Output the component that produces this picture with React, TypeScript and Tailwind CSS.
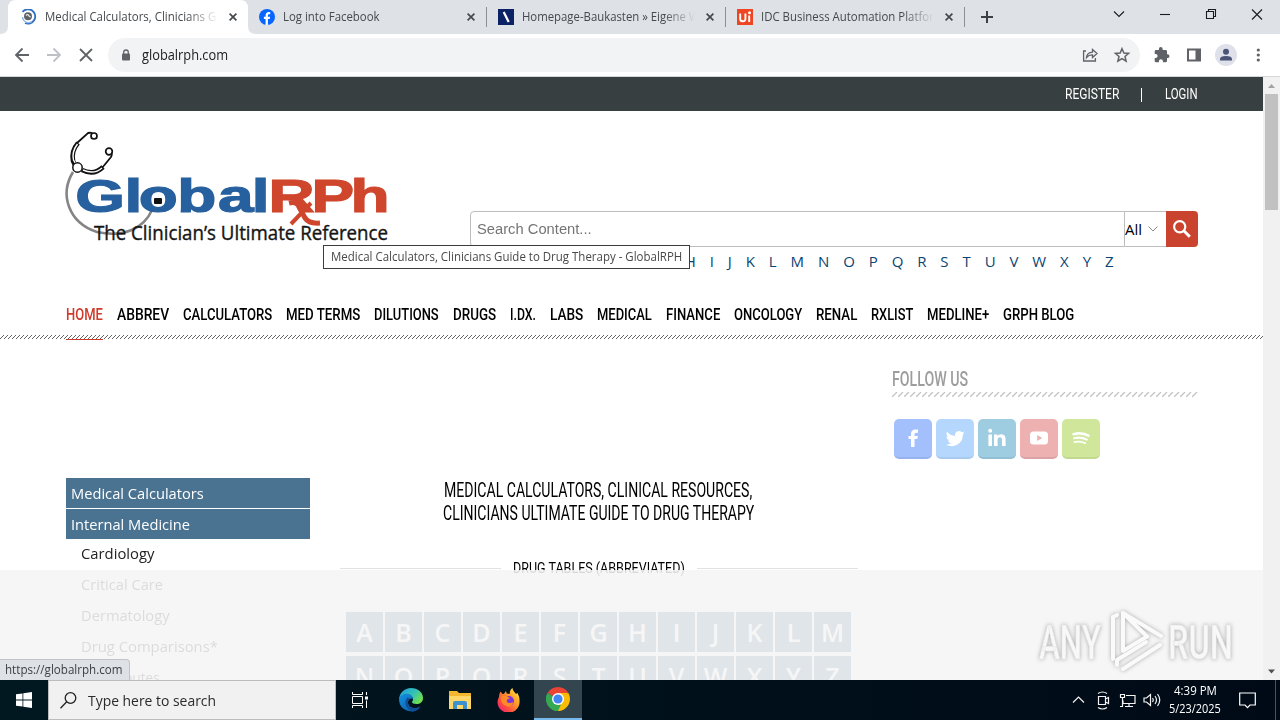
import { useLayoutEffect, useRef, useState, type ReactNode } from "react";

const NAV = [
    { label: "HOME", w: 37 },
    { label: "ABBREV", w: 52 },
    { label: "CALCULATORS", w: 89 },
    { label: "MED TERMS", w: 74 },
    { label: "DILUTIONS", w: 65 },
    { label: "DRUGS", w: 43 },
    { label: "I.DX.", w: 26 },
    { label: "LABS", w: 33 },
    { label: "MEDICAL", w: 55 },
    { label: "FINANCE", w: 54 },
    { label: "ONCOLOGY", w: 68 },
    { label: "RENAL", w: 41 },
    { label: "RXLIST", w: 42 },
    { label: "MEDLINE+", w: 62 },
    { label: "GRPH BLOG", w: 71 },
];

const LETTERS = "ABCDEFGHIJKLMNOPQRSTUVWXYZ".split("");

const TOPICS = [
    { label: "Critical Care", w: 82 },
    { label: "Dermatology", w: 89 },
    { label: "Drug Comparisons*", w: 137 },
    { label: "Drug Routes", w: 79 },
];

// Squeezes a single line of text into a fixed width
function Fit({ w, children, className = "" }: { w: number; children: ReactNode; className?: string }) {
    const ref = useRef<HTMLSpanElement>(null);
    const [scale, setScale] = useState(1);

    useLayoutEffect(() => {
        if (ref.current) setScale(w / ref.current.offsetWidth);
    }, [w]);

    return (
        <span className={`inline-block whitespace-nowrap shrink-0 ${className}`} style={{ width: w }}>
            <span ref={ref} className="inline-block origin-left" style={{ transform: `scaleX(${scale})` }}>
                {children}
            </span>
        </span>
    );
}

function CloseX({ size = 8, className = "" }: { size?: number; className?: string }) {
    return (
        <svg width={size} height={size} viewBox="0 0 8 8" className={className} stroke="currentColor" fill="none">
            <path d="M.6.6l6.8 6.8M7.4.6L.6 7.4" strokeWidth="1.7" />
        </svg>
    );
}

function Tab({ icon, title, w, fade }: { icon: ReactNode; title: string; w: number; fade?: boolean }) {
    return (
        <div className="flex h-[34px] w-[239px] shrink-0 items-center pl-3 text-[#45494d]">
            {icon}
            <div className={`ml-2 w-[173px] overflow-hidden text-[12px] leading-4 ${fade ? "[mask-image:linear-gradient(to_right,black_82%,transparent)]" : ""}`}>
                <Fit w={w}>{title}</Fit>
            </div>
            <CloseX className="ml-[11px]" />
        </div>
    );
}

function TabBar() {
    return (
        <div className="relative flex h-[34px] bg-[#dee1e6] pl-2">
            <div className="relative w-[239px] shrink-0">
                <div className="absolute -left-2 right-[-9px] top-0 h-[34px]">
                    <svg width="256" height="34" viewBox="0 0 256 34">
                        <path d="M0 34q8 0 8-8V8q0-8 8-8h224q8 0 8 8v18q0 8 8 8z" fill="#fff" />
                    </svg>
                </div>
                <div className="relative">
                    <Tab
                        fade
                        title="Medical Calculators, Clinicians G"
                        w={171}
                        icon={
                            <svg width="17" height="16" viewBox="-1 0 17 16" fill="none" className="shrink-0">
                                <path d="M1.500 2.800A7.200 7.200 0 1 1 4 14" stroke="#2f6fc4" strokeWidth="1.800" />
                                <path d="M1.500 8A6 6 0 0 0 11 12.500" stroke="#8ab4e6" strokeWidth="1.300" />
                                <circle cx="7" cy="7.300" r="4" fill="#5f6368" />
                                <path d="M5 6.500q2-2 3 .5l1.600 1" stroke="#e4e8ec" strokeWidth="1.200" />
                            </svg>
                        }
                    />
                </div>
            </div>
            <div className="flex items-center">
                <Tab
                    title="Log into Facebook"
                    w={97}
                    icon={
                        <svg width="16" height="16" viewBox="0 0 16 16" className="shrink-0">
                            <circle cx="8" cy="8" r="8" fill="#0866ff" />
                            <path d="M6.600 16V10H4.900V7.700h1.700V6.500c0-2.300 1.200-3.500 3.200-3.500.6 0 1 .1 1.400.2v2h-1c-1 0-1.300.5-1.300 1.300v1.200h2.200L10.700 10H8.900v6z" fill="#fff" />
                        </svg>
                    }
                />
                <div className="-mr-px h-5 w-px bg-[#8c9095]" />
                <Tab
                    fade
                    title="Homepage-Baukasten » Eigene W"
                    w={177}
                    icon={
                        <svg width="16" height="16" viewBox="0 0 16 16" className="shrink-0">
                            <path d="M0 0h16v16H0z" fill="#0b2265" />
                            <path d="M5.700 3l5 10" stroke="#fff" strokeWidth="2.200" />
                        </svg>
                    }
                />
                <div className="-mr-px h-5 w-px bg-[#8c9095]" />
                <Tab
                    fade
                    title="IDC Business Automation Platfor"
                    w={173}
                    icon={
                        <svg width="16" height="16" viewBox="0 0 16 16" className="shrink-0">
                            <path d="M0 0h16v16H0z" fill="#ee4623" />
                            <path d="M3.200 4.500v5.200q0 2.600 2.600 2.600t2.600-2.600V4.500M12.200 6.500v6.500" stroke="#fff" strokeWidth="1.900" fill="none" />
                            <circle cx="12.500" cy="3.700" r="1.500" fill="#fff" />
                        </svg>
                    }
                />
                <div className="h-5 w-px bg-[#8c9095]" />
                <svg width="12" height="12" viewBox="0 0 12 12" className="ml-4 text-[#3c4043]">
                    <path d="M6 0v12M0 6h12" stroke="currentColor" strokeWidth="2" />
                </svg>
            </div>
            <svg width="160" height="28" viewBox="0 0 160 28" className="ml-auto mr-3 shrink-0" fill="none" stroke="#1b1c1e" strokeWidth="1.100">
                <path d="M6 11.500l5 5 5-5" />
                <path d="M52 14.500h10" />
                <path d="M98.500 11.500h7v7h-7zM100.500 11.500v-2h7v7h-2" />
                <path d="M144 9.500l10 10M154 9.500l-10 10" />
            </svg>
        </div>
    );
}

function Toolbar() {
    return (
        <div className="flex h-[43px] items-center border-b border-[#d5d8da] bg-white pl-[14px]">
            <svg width="80" height="18" viewBox="0 0 80 18" fill="none" strokeWidth="1.800" className="shrink-0">
                <path d="M15 9H2M8.500 2.500L2 9l6.500 6.500" stroke="#5f6368" />
                <path d="M33 9h13M39.500 2.500L46 9l-6.500 6.500" stroke="#bdc1c6" />
                <path d="M66 3l12 12M78 3L66 15" stroke="#5f6368" />
            </svg>
            <div className="ml-[14px] flex h-[34px] w-[1032px] items-center rounded-full bg-[#f1f3f4] pl-[13px]">
                <svg width="10" height="13" viewBox="0 0 10 13" fill="#5f6368">
                    <rect x="1" y="4.500" width="8" height="7" rx="1" />
                    <path d="M2.700 5V3.300a2.300 2.300 0 0 1 4.600 0V5" fill="none" stroke="#5f6368" strokeWidth="1.300" />
                </svg>
                <Fit w={86} className="mb-0.5 ml-[11px] text-[14px] text-[#202124]">globalrph.com</Fit>
                <svg width="50" height="18" viewBox="0 0 50 18" className="ml-auto mr-2" fill="none" stroke="#5f6368" strokeWidth="1.300">
                    <path d="M4 5H1.600v10h11.800v-3" />
                    <path d="M4.500 11.500q.5-5 6-5.300V3.500l4.500 4-4.500 4V8.800q-3.700-.2-6 2.700z" />
                    <path d="M40 2.700l1.900 4.300 4.700.4-3.600 3.100 1.100 4.600-4.100-2.500-4.100 2.500 1.100-4.600-3.600-3.100 4.700-.4z" strokeWidth="1.500" />
                </svg>
            </div>
            <svg width="126" height="26" viewBox="0 0 126 26" className="ml-2 shrink-0" fill="#5f6368">
                <path d="M20 12.300h-1V9.200q0-1.300-1.300-1.300h-3V7a1.900 1.900 0 0 0-3.800 0v.9H8q-1.300 0-1.300 1.300V12h.9a2 2 0 0 1 0 4h-.9v2.900q0 1.300 1.300 1.300h2.900v-.9a2 2 0 0 1 4 0v.9h2.800q1.300 0 1.300-1.300V16h1a1.900 1.900 0 0 0 0-3.700z" />
                <path d="M39 6.500h14v13H39zM41 8.500v9h6.500v-9z" fillRule="evenodd" />
                <circle cx="78" cy="13" r="11" fill="#dee1e9" />
                <circle cx="78" cy="9.700" r="3" fill="#4b5377" />
                <path d="M72 18.500v-1.200q0-3.300 6-3.300t6 3.300v1.200z" fill="#4b5377" />
                <circle cx="110.300" cy="8" r="1.600" />
                <circle cx="110.300" cy="13" r="1.600" />
                <circle cx="110.300" cy="18" r="1.600" />
            </svg>
        </div>
    );
}

function Logo() {
    return (
        <svg width="330" height="120" viewBox="60 127 330 120" className="shrink-0" fill="none">
            <path d="M73 172C59 195 69 223 97 232c27 6 47-4 55-22" stroke="#858585" strokeWidth="2.600" />
            <g stroke="#111">
                <path d="M78 143q-7 8-5 18l3 6" strokeWidth="4.600" />
                <path d="M77.500 144q-6 8-4 16l3 5" stroke="#fff" strokeWidth="1.400" />
                <path d="M77 143l11-10q5-1 5 2" strokeWidth="1.800" />
                <path d="M102 168l9-11q2-3-1-6" strokeWidth="1.800" />
                <path d="M82 170q12 6 21-3" strokeWidth="4.600" />
                <path d="M83 170q11 5 19-2" stroke="#fff" strokeWidth="1.400" />
                <circle cx="94" cy="136" r="3" fill="#fff" strokeWidth="1.700" />
                <circle cx="109" cy="151.500" r="3.300" fill="#fff" strokeWidth="1.700" />
                <circle cx="77.500" cy="167.500" r="4.700" fill="#fff" strokeWidth="1.500" />
            </g>
            <g transform="scale(1.36 1)" fontFamily="'Liberation Sans', sans-serif" fontWeight="700" fontSize="47" strokeWidth="1.200">
                <text x="55.300 91.500 102 130.300 160.300 185.200" y="212.500" fill="#27609e" stroke="#27609e">Global</text>
                <text x="197.500 229.100 257.800" y="212.500" fill="#cf462d" stroke="#cf462d">RPh</text>
            </g>
            <path d="M289 203q8-2 10 4l6 11q4 6 15 5" stroke="#cf462d" strokeWidth="5" />
            <path d="M311 203l-20 21" stroke="#cf462d" strokeWidth="4" />
            <rect x="154" y="198" width="8" height="6" rx="1" fill="#111" />
            <text x="94" y="239.500" textLength="294" lengthAdjust="spacingAndGlyphs" fill="#151515" fontFamily="'Open Sans', sans-serif" fontSize="20.500" stroke="#151515" strokeWidth=".4">
                The Clinician’s Ultimate Reference
            </text>
        </svg>
    );
}

function SearchForm() {
    return (
        <div className="w-[728px] pt-[84px]">
            <div className="flex h-9">
                <div className="flex h-9 w-[655px] items-center rounded-l border border-[#bdbdbd] pl-1.5 font-['Liberation_Sans',sans-serif] text-[15.500px] text-[#757575]">
                    <Fit w={115}>Search Content...</Fit>
                </div>
                <div className="flex w-[41px] items-center border-y border-[#bdbdbd] text-[15px] text-black">
                    <Fit w={17}>All</Fit>
                    <svg width="10" height="6" viewBox="0 0 10 6" className="ml-1.5" fill="none" stroke="#888">
                        <path d="M.5.5L5 5 9.500.5" />
                    </svg>
                </div>
                <div className="flex w-8 items-center justify-center rounded-r bg-[#ca432e]">
                    <svg width="20" height="20" viewBox="0 0 20 20" fill="none" stroke="#fff">
                        <circle cx="7.700" cy="7.700" r="5.600" strokeWidth="2.200" />
                        <path d="M11.800 11.800l6 6" strokeWidth="3" />
                    </svg>
                </div>
            </div>
            <div className="flex justify-end gap-[13.900px] pr-[84.500px] pt-[3px] text-[15px] leading-[22px] text-[#0c4472]">
                {LETTERS.slice(7).map((l) => <span key={l}>{l}</span>)}
            </div>
        </div>
    );
}

function Hatch({ fine }: { fine?: boolean }) {
    return fine ? (
        <svg width="100%" height="4" className="block shrink-0">
            <defs>
                <pattern id="hatch-fine" width="4" height="4" patternUnits="userSpaceOnUse">
                    <path d="M-1 5L5-1M-1 1L1-1M3 5l2-2" stroke="#555" strokeWidth=".9" />
                </pattern>
            </defs>
            <rect width="100%" height="4" fill="url(#hatch-fine)" />
        </svg>
    ) : (
        <svg width="306" height="5" className="block">
            <defs>
                <pattern id="hatch-wide" width="6" height="5" patternUnits="userSpaceOnUse">
                    <path d="M0 5L5 0" stroke="#c4c4c4" strokeWidth="1.300" />
                </pattern>
            </defs>
            <rect width="306" height="5" fill="url(#hatch-wide)" />
        </svg>
    );
}

function Socials() {
    return (
        <div className="ml-0.5 mt-[22px] flex gap-1">
            <div className="flex h-10 w-[38px] items-center justify-center rounded-[5px] border-b-2 border-[#97b3ef] bg-[#a3c0fd]">
                <svg width="20" height="20" viewBox="0 0 20 20" fill="#fff"><path d="M8 19v-8H5.500V8H8V6q0-4.500 4.500-4.500H15v3.200h-1.800q-1.700 0-1.700 1.600V8h3.300l-.5 3h-2.800v8z" /></svg>
            </div>
            <div className="flex h-10 w-[38px] items-center justify-center rounded-[5px] border-b-2 border-[#a8caef] bg-[#b5d7fd]">
                <svg width="19" height="19" viewBox="0 0 24 24" fill="#fff"><path d="M23.600 4.900a9.700 9.700 0 0 1-2.800.8 4.900 4.900 0 0 0 2.100-2.700 9.700 9.700 0 0 1-3.100 1.200 4.900 4.900 0 0 0-8.300 4.500A13.900 13.900 0 0 1 1.400 3.500a4.900 4.900 0 0 0 1.500 6.500 4.900 4.900 0 0 1-2.200-.6 4.900 4.900 0 0 0 3.900 4.900 4.900 4.900 0 0 1-2.200.1 4.900 4.900 0 0 0 4.600 3.400A9.900 9.900 0 0 1 0 19.500a13.900 13.900 0 0 0 21.200-12.300z" /></svg>
            </div>
            <div className="flex h-10 w-[38px] items-center justify-center rounded-[5px] border-b-2 border-[#91bfd3] bg-[#9ecce0]">
                <svg width="20" height="20" viewBox="0 0 20 20" fill="#fff"><circle cx="3.200" cy="2.800" r="2" /><path d="M1.400 6.500H5V18H1.400zM7 6.500h3.400V8Q11.500 6.200 14 6.200q4.600 0 4.600 5V18H15v-6q0-2.800-2.100-2.800-2.300 0-2.300 2.800v6H7z" /></svg>
            </div>
            <div className="flex h-10 w-[38px] items-center justify-center rounded-[5px] border-b-2 border-[#dba3a5] bg-[#eeb1b1]">
                <svg width="20" height="20" viewBox="0 0 20 20" fillRule="evenodd" fill="#fff"><path d="M4.500 3.500h11Q19 3.500 19 7v6q0 3.500-3.500 3.500h-11Q1 16.500 1 13V7q0-3.500 3.500-3.500zM8.200 7v6l5-3z" /></svg>
            </div>
            <div className="flex h-10 w-[38px] items-center justify-center rounded-[5px] border-b-2 border-[#c1d88f] bg-[#cfe69b]">
                <svg width="20" height="20" viewBox="0 0 20 20" fill="none" stroke="#fff" strokeLinecap="round"><path d="M2.500 6.200q8-2.300 15 1.500" strokeWidth="2.600" /><path d="M3 10.300q7-1.800 12.800 1.300" strokeWidth="2.100" /><path d="M3.500 14q5.500-1.300 10.700 1.100" strokeWidth="1.800" /></svg>
            </div>
        </div>
    );
}

function Watermark() {
    return (
        <svg width="200" height="70" viewBox="1036 606 200 70" className="absolute bottom-1 right-[27px] drop-shadow-[0_0_2px_#aaa]" fill="none">
            <g fontFamily="Roboto, sans-serif" fontSize="48" fontWeight="500" fill="#f8f8f8" stroke="#e4e4e4" strokeWidth=".6">
                <text x="1039" y="659" textLength="62" lengthAdjust="spacingAndGlyphs">ANY</text>
                <text x="1168" y="659" textLength="65" lengthAdjust="spacingAndGlyphs">RUN</text>
            </g>
            <g stroke="#fafafa" strokeWidth="4" strokeLinejoin="round" strokeLinecap="round">
                <path d="M1123 613v38l24-14.500z" />
                <path d="M1123 613l38 23" />
                <path d="M1113 617v42M1113 617l4-2" />
                <path d="M1123 669l37-24M1117 665v-5l29-18" />
            </g>
        </svg>
    );
}

function Page() {
    return (
        <div className="relative flex h-[603px] w-[1263px] shrink-0 flex-col overflow-hidden bg-white">
            <div className="flex h-[34px] shrink-0 items-center justify-end bg-[#373f40] pr-[65px] pt-px font-['Roboto',sans-serif] text-[14.500px] text-white">
                <Fit w={54}>REGISTER</Fit>
                <span className="ml-[22px] mr-[23px] h-[14px] w-px bg-white" />
                <Fit w={33}>LOGIN</Fit>
            </div>

            <div className="flex h-[176px] shrink-0 pl-[60px] pt-4">
                <Logo />
                <div className="ml-20">
                    <SearchForm />
                </div>
            </div>

            <div className="flex h-12 shrink-0 gap-[14px] pl-[66px] pt-4 font-['Roboto',sans-serif] text-[16.500px] font-medium leading-6 text-black">
                {NAV.map((n, i) => (
                    <Fit key={n.label} w={n.w} className={i === 0 ? "text-[#cf3a2a]" : ""}>{n.label}</Fit>
                ))}
            </div>
            <Hatch fine />
            <div className="ml-[66px] h-px w-[37px] shrink-0 bg-[#cf3a2a]" />

            <div className="flex pl-[66px]">
                <div className="w-[244px] shrink-0 pt-[138px] text-[15px]">
                    <div className="flex h-[30px] items-center bg-[#4a7291] pl-[5px] text-white"><Fit w={133}>Medical Calculators</Fit></div>
                    <div className="mt-px flex h-[30px] items-center bg-[#4a7291] pl-[5px] text-white"><Fit w={119}>Internal Medicine</Fit></div>
                    <div className="flex h-[30px] items-center pb-0.5 pl-[15px] text-[#222]"><Fit w={73}>Cardiology</Fit></div>
                    {TOPICS.map((t) => (
                        <div key={t.label} className="flex h-[31px] items-center pl-[15px] text-[#222]"><Fit w={t.w}>{t.label}</Fit></div>
                    ))}
                </div>

                <div className="ml-[30px] flex w-[518px] shrink-0 flex-col pt-[139px]">
                    <div className="flex flex-col items-center pr-0.5 font-['Roboto',sans-serif] text-[19.500px] leading-[23px] text-black">
                        <Fit w={308}>MEDICAL CALCULATORS, CLINICAL RESOURCES,</Fit>
                        <Fit w={311}>CLINICIANS ULTIMATE GUIDE TO DRUG THERAPY</Fit>
                    </div>
                    <div className="mt-[31px] flex h-6 items-center justify-between font-['Roboto',sans-serif] text-[15px] text-black">
                        <span className="h-px w-[161px] bg-[#e2e2e2]" />
                        <Fit w={172}>DRUG TABLES (ABBREVIATED)</Fit>
                        <span className="h-px w-[161px] bg-[#e2e2e2]" />
                    </div>
                    <div className="ml-1.5 mt-8 grid w-[505px] grid-cols-13 gap-x-0.5 gap-y-1">
                        {LETTERS.map((l) => (
                            <span key={l} className="flex h-10 items-center justify-center bg-[#4a7291] pt-0.5 text-[25px] font-semibold text-white">{l}</span>
                        ))}
                    </div>
                </div>

                <div className="ml-[34px] w-[306px] shrink-0 pt-[27px]">
                    <div className="h-[25px] font-['Roboto',sans-serif] text-[20px] font-medium leading-[25px] text-[#9d9d9d]"><Fit w={76}>FOLLOW US</Fit></div>
                    <Hatch />
                    <Socials />
                </div>
            </div>

            <div className="absolute left-[323px] top-[168px] flex h-6 w-[367px] items-center border border-[#3c3c3c] bg-white pl-[7px] text-[12px] text-[#484848]">
                <Fit w={351}>Medical Calculators, Clinicians Guide to Drug Therapy - GlobalRPH</Fit>
            </div>
            <div className="absolute inset-x-0 bottom-0 h-[110px] bg-[#f5f5f5]/88" />
            <Watermark />
            <div className="absolute bottom-0 left-0 flex h-[21px] w-[130px] items-center rounded-tr-sm border-r border-t border-[#c0c4c8] bg-[#dee1e6] pl-[5px] text-[12px] text-[#3c4043]">
                <Fit w={118}>https://globalrph.com</Fit>
            </div>
        </div>
    );
}

function Scrollbar() {
    return (
        <div className="flex w-[17px] flex-col items-center bg-[#f1f1f1]">
            <svg width="17" height="17" viewBox="0 0 17 17"><path d="M5 11l3.500-4 3.500 4z" fill="#a3a3a3" /></svg>
            <div className="h-[116px] w-[13px] bg-[#c1c1c1]" />
            <svg width="17" height="17" viewBox="0 0 17 17" className="mt-auto"><path d="M5 6.500l3.500 4 3.500-4z" fill="#505050" /></svg>
        </div>
    );
}

function Taskbar() {
    return (
        <div className="flex h-10 bg-linear-to-r from-[#021820] to-[#000a16]">
            <div className="flex w-12 items-center justify-center">
                <svg width="16" height="16" viewBox="0 0 16 16" fill="#fff"><path d="M0 2.300L6.500 1.400v6.200H0zM7.300 1.300L16 0v7.600H7.300zM0 8.400h6.500v6.200L0 13.700zM7.300 8.400H16V16l-8.700-1.300z" /></svg>
            </div>
            <div className="flex w-72 items-center border border-[#bcbcbc] bg-[#f1f1f1] pl-[11px] text-[15px] text-[#2b2b2b]">
                <svg width="17" height="17" viewBox="0 0 17 17" fill="none" stroke="#222" strokeWidth="1.300"><circle cx="10.500" cy="6" r="5.300" /><path d="M6.700 9.800L.5 16.300" /></svg>
                <Fit w={128} className="ml-[11px]">Type here to search</Fit>
            </div>
            <div className="flex w-12 items-center justify-center">
                <svg width="18" height="16" viewBox="0 0 18 16" fill="none" stroke="#fff"><path d="M1.500 0v2.500h10V0M1.500 4.500h10v7h-10zM1.500 16v-2.500h10V16M15.500 0v3M15.500 8.500V16" /><path d="M14 4.500h3v3h-3z" fill="#fff" stroke="none" /></svg>
            </div>
            <div className="flex w-[54px] items-center justify-center">
                <svg width="24" height="24" viewBox="0 0 24 24">
                    <defs>
                        <linearGradient id="edge-top" x1="0" y1="0" x2="1" y2=".6"><stop stopColor="#1b9de2" /><stop offset=".6" stopColor="#35c1b5" /><stop offset="1" stopColor="#6ee04f" /></linearGradient>
                        <linearGradient id="edge-low" x1="0" y1="0" x2="1" y2="1"><stop stopColor="#1490df" /><stop offset="1" stopColor="#0c59a4" /></linearGradient>
                    </defs>
                    <path d="M0 12A12 12 0 0 1 12 0c7 0 12 4.500 12 10 0 4-3 6-6.500 6-3 0-4.500-1-4.500-2 0-.7 1-1.200 1-3C14 8.500 11 7 8 7c-5 0-8 3-8 5z" fill="url(#edge-top)" />
                    <path d="M0 12c0-4 4-6.500 8-6.300 3.500.2 6 2.300 6 5.300-1.200-1.500-5.500 0-5 4 .5 4.500 6.500 7 12.500 3.500A12 12 0 0 1 0 12z" fill="url(#edge-low)" />
                    <path d="M8.500 9.500c-4 4-2 12 5 14.300 3-.3 6-2 8-5.300-6 3.500-12 1-12.500-3.500-.2-2 .5-3.400 2-4.400z" fill="#0f4f98" />
                </svg>
            </div>
            <div className="flex w-[42px] items-center justify-center pl-0.5">
                <svg width="22" height="20" viewBox="0 0 22 20"><path d="M0 1h8l2 2h12v16H0z" fill="#f3b62e" /><path d="M0 6h22v13H0z" fill="#ffd768" /><path d="M4 19v-6q0-2 2-2h10q2 0 2 2v6h-4v-4H8v4z" fill="#3d91cf" /></svg>
            </div>
            <div className="flex w-[54px] items-center justify-center pl-1">
                <svg width="24" height="24" viewBox="0 0 24 24">
                    <defs>
                        <linearGradient id="fox" x1="1" y1="0" x2="0" y2="1"><stop stopColor="#fff44f" /><stop offset=".35" stopColor="#ffa429" /><stop offset=".7" stopColor="#ff4a41" /><stop offset="1" stopColor="#e31587" /></linearGradient>
                    </defs>
                    <path d="M3.500 3.500L5.500 6l1.500-.2L9 3l.7 2.500 3 .5c0-3 1-5 2.800-6 .2 3 2.500 4 3.500 6l1.500-1q2.500 4.500 2 8.500A11 10.500 0 1 1 2 9q0-3 1.500-5.500z" fill="url(#fox)" />
                    <circle cx="12" cy="13" r="5" fill="#7d36d8" />
                    <path d="M4 8.500q4-2 7 .5l2 1-3 1.800q-1 3.200 3 3.200 2 0 3.500-1-2 6-7.500 4T4 8.500z" fill="#ff8a28" />
                </svg>
            </div>
            <div className="flex w-12 items-center justify-center border-b-2 border-[#76b9ed] bg-[#33454e]">
                <svg width="24" height="24" viewBox="0 0 24 24">
                    <path d="M12 12L1.610 6A12 12 0 0 1 22.390 6z" fill="#ea4335" />
                    <path d="M12 12L22.390 6A12 12 0 0 1 12 24z" fill="#fbbc05" />
                    <path d="M12 12v12A12 12 0 0 1 1.610 6z" fill="#34a853" />
                    <path d="M12 6h10.400q-6 3-7.200 9L12 24l4.800-9z" fill="#fbbc05" />
                    <path d="M1.610 6L6.800 15 12 18l3-.5L12 24A12 12 0 0 1 1.610 6z" fill="#34a853" />
                    <circle cx="12" cy="12" r="6" fill="#fff" />
                    <circle cx="12" cy="12" r="4.600" fill="#4285f4" />
                </svg>
            </div>
            <svg width="92" height="20" viewBox="0 0 92 20" className="my-auto ml-auto shrink-0" fill="none" stroke="#f3f3f3" strokeWidth="1.200">
                <path d="M4 12.500L9.500 7l5.500 5.500" />
                <path d="M29.500 6.500h7v8h-7zM36.500 9l3-1.500v6l-3-1.500M29 3.500q4.500-3 9 0M29 17.500q4.500 3 9 0" />
                <path d="M57 5.500h9v8H54v-3M60 13.500v3M56 16.500h8M51.500 4.500h4v3h-4zM53.500 7.500v9M51 16.500h3" />
                <path d="M75 8h2.500l4-3.500v11L77.500 12H75zM83.500 8q1.500 2 0 4M86 6q3 4 0 8M88.500 4q4.500 6 0 12" />
            </svg>
            <div className="ml-[7px] flex w-[54px] shrink-0 flex-col items-center pt-[2px] text-[12px] leading-[17.500px] text-white">
                <Fit w={43}>4:39 PM</Fit>
                <Fit w={52}>5/23/2025</Fit>
            </div>
            <svg width="17" height="17" viewBox="0 0 17 17" className="my-auto ml-[17px] mr-[19px] shrink-0" fill="none" stroke="#fff" strokeWidth="1.200"><path d="M.7 1h15.600v12H11l-2.500 2.700L6 13H.7z" /></svg>
            <div className="mr-1 w-px bg-[#4a535b]" />
        </div>
    );
}

export default function App() {
    return (
        <div className="h-[720px] w-[1280px] overflow-hidden bg-white font-['Open_Sans','Noto_Sans',sans-serif]">
            <TabBar />
            <Toolbar />
            <div className="flex h-[603px]">
                <Page />
                <Scrollbar />
            </div>
            <Taskbar />
        </div>
    );
}
